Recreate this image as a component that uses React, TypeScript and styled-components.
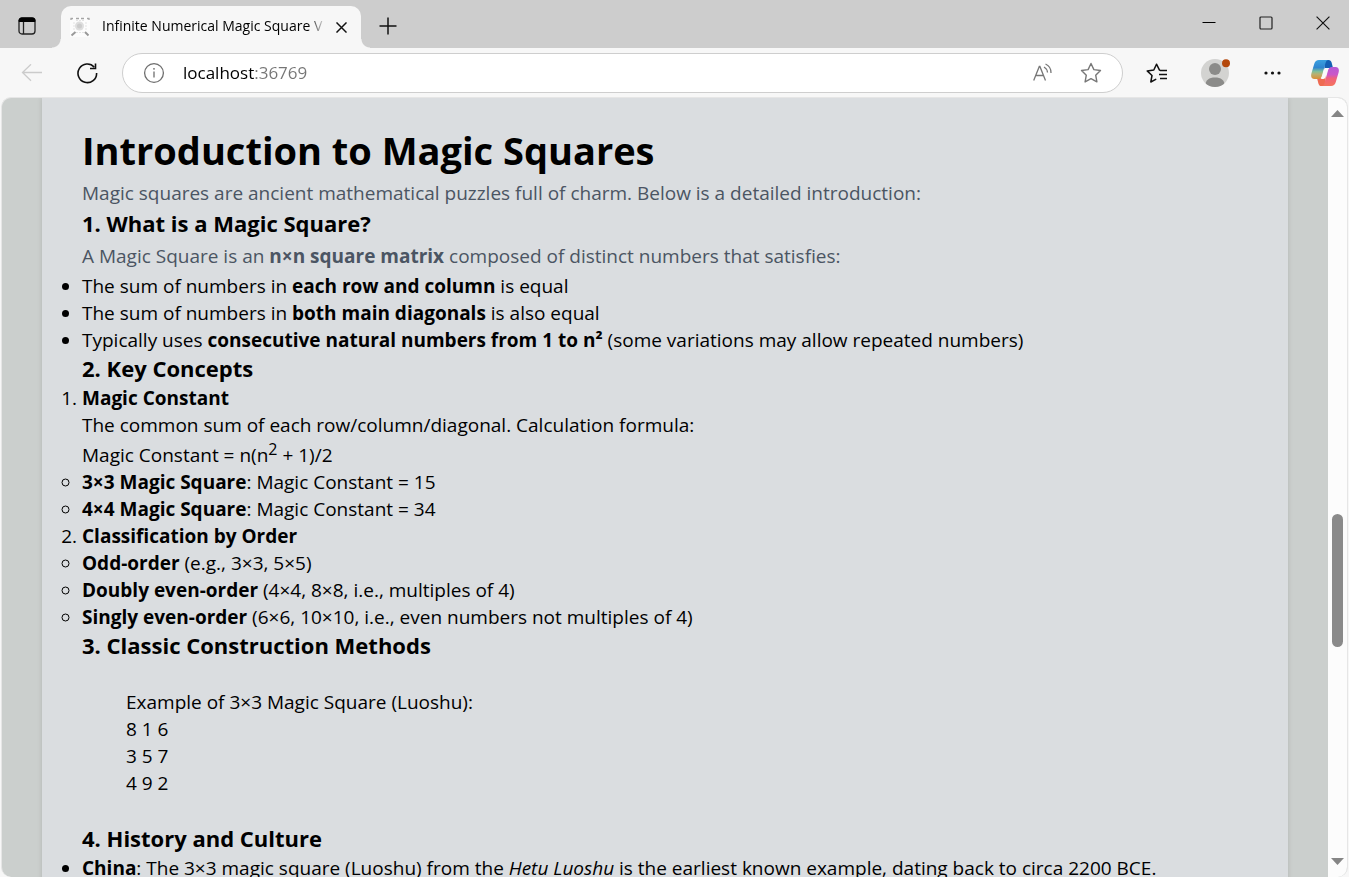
import React from "react";
import styled, { createGlobalStyle } from "styled-components";

const GlobalStyle = createGlobalStyle`
  *, *::before, *::after { box-sizing: border-box; }
  body { margin: 0; background: #f7f7f7; }
  button { border: 0; padding: 0; background: none; color: inherit; }
  svg { display: block; }
`;

const Window = styled.div`
  display: flex;
  flex-direction: column;
  height: 100vh;
  overflow: hidden;
  background: #f7f7f7;
  color: #000;
  font-family: "Open Sans", "Noto Sans", sans-serif;
`;

const TitleBar = styled.header`
  display: flex;
  align-items: stretch;
  height: 48px;
  flex: none;
  background: #cdcdcd;
`;

const TitleButton = styled.button<{ $width: number }>`
  display: flex;
  align-items: center;
  justify-content: center;
  flex: none;
  width: ${(p) => p.$width}px;
  padding-top: 4px;
`;

const Tab = styled.div`
  position: relative;
  display: flex;
  align-items: center;
  gap: 12px;
  width: 300px;
  margin: 6px 0 0 7px;
  padding: 0 8px 0 9px;
  border-radius: 10px 10px 0 0;
  background: #f7f7f7;

  &::before,
  &::after {
    content: "";
    position: absolute;
    bottom: 0;
    width: 9px;
    height: 9px;
  }
  &::before {
    right: 100%;
    background: radial-gradient(circle at 0 0, #cdcdcd 8px, #f7f7f7 9px);
  }
  &::after {
    left: 100%;
    background: radial-gradient(circle at 100% 0, #cdcdcd 8px, #f7f7f7 9px);
  }
`;

const TabTitle = styled.span`
  flex: 1;
  overflow: hidden;
  white-space: nowrap;
  font-size: 14px;
  line-height: 24px;
  padding-bottom: 2px;
  mask-image: linear-gradient(to right, #000 206px, transparent 224px);
`;

const CloseTab = styled.button`
  display: flex;
  align-items: center;
  justify-content: center;
  flex: none;
  width: 24px;
  height: 24px;
  margin-left: -12px;
`;

const WindowControls = styled.div`
  display: flex;
  gap: 5px;
  height: 42px;
  margin-left: auto;
`;

const Toolbar = styled.nav`
  display: flex;
  align-items: center;
  gap: 10px;
  height: 49px;
  flex: none;
  padding: 0 6px 0 10px;
`;

const ToolButton = styled.button<{ $width?: number }>`
  display: flex;
  align-items: center;
  justify-content: center;
  flex: none;
  width: ${(p) => p.$width ?? 48}px;
  height: 40px;
`;

const AddressBar = styled.label`
  display: flex;
  align-items: center;
  flex: 1;
  height: 40px;
  margin-left: 3px;
  padding: 0 7px 0 20px;
  border: 1px solid #cecece;
  border-radius: 20px;
  background: #fff;
`;

const AddressInput = styled.input`
  flex: 1;
  min-width: 0;
  margin-left: 18px;
  padding: 0;
  border: 0;
  outline: 0;
  font-family: inherit;
  font-size: 17px;
  line-height: 26px;
  background: linear-gradient(to right, #000 71px, #757575 71px);
  background-clip: text;
  -webkit-text-fill-color: transparent;
`;

const Viewport = styled.div`
  display: flex;
  flex: 1;
  min-height: 0;
  margin: 0 1px;
  border: 1px solid #e6e6e6;
  border-bottom: 0;
  border-radius: 10px;
  overflow: hidden;
  background: #cbcfcd;
`;

const Page = styled.main`
  flex: 1;
  min-width: 0;
  padding: 0 40px;
  overflow: hidden;
`;

const Article = styled.article`
  min-height: 100%;
  padding: 26px 40px;
  background: #dadde0;
  box-shadow: 0 0 5px rgba(0, 0, 0, 0.12);
  font-size: 19px;
  line-height: 27px;
`;

const Title = styled.h1`
  margin: 0;
  font-size: 38px;
  line-height: 53px;
`;

const Heading = styled.h3`
  margin: 0 0 2px;
  font-size: 22px;
  line-height: 29px;
`;

const Paragraph = styled.p`
  margin: 0;
  line-height: 32px;
  color: #4b5563;
`;

const List = styled.ul<{ $marker?: string }>`
  margin: 0;
  padding: 0;
  list-style: ${(p) => p.$marker ?? "disc"} outside;

  ${Paragraph} + & {
    margin-top: 1px;
  }
`;

const Numbered = styled.ol`
  margin: 0;
  padding: 0;
`;

const Formula = styled.div`
  padding-top: 3px;

  sup {
    font-size: 16px;
    line-height: 0;
  }
`;

const Example = styled.div`
  padding: 27px 44px;
`;

const Scrollbar = styled.div`
  display: flex;
  flex-direction: column;
  align-items: center;
  flex: none;
  width: 19px;
  padding: 12px 0;
  background: #fcfcfc;
`;

const Track = styled.div`
  display: flex;
  flex-direction: column;
  flex: 1;
  padding: 4px 0;
`;

const Space = styled.div<{ $share: number }>`
  flex: ${(p) => p.$share} 0 0;
`;

const Thumb = styled.div`
  flex: 132 0 0;
  width: 11px;
  border-radius: 6px;
  background: #8a8a8a;
`;

const TabMenuIcon = () => (
  <svg width="18" height="18" viewBox="0 0 18 18" fill="none">
    <rect x="1" y="1" width="16" height="16" rx="3" stroke="#222" strokeWidth="1.3" />
    <path d="M1 4.500V3.500A2.500 2.500 0 0 1 3.500 1h11A2.500 2.500 0 0 1 17 3.500v1z" fill="#000" stroke="#000" />
    <path d="M5.500 5v12" stroke="#222" strokeWidth="1.3" />
  </svg>
);

const Favicon = () => (
  <svg width="20" height="20" viewBox="0 0 20 20" fill="none">
    <rect width="20" height="20" fill="#fcfcfc" />
    <circle cx="9.500" cy="9" r="4.500" fill="#dedede" />
    <circle cx="9.500" cy="9" r="2.500" fill="#cccccc" />
    <path d="M4 5v9M16 5v9M6 3.500h8M6 15.500h8" stroke="#e3e3e3" strokeDasharray="2 1" />
    <path d="M1 3V1.500h2M17 1.500h2V3M6 1.500h3M11 1.500h3" stroke="#a5a5a5" strokeWidth="1.3" />
    <path d="M1.500 18.500l4-3.500M18.500 18.500l-3.500-3.500" stroke="#999" strokeWidth="2" />
  </svg>
);

const CloseIcon = ({ size, weight }: { size: number; weight: number }) => (
  <svg width={size} height={size} viewBox="0 0 12 12" stroke="#111" strokeWidth={weight}>
    <path d="M.5.5l11 11M11.500.5l-11 11" />
  </svg>
);

const PlusIcon = () => (
  <svg width="18" height="18" viewBox="0 0 18 18" stroke="#111" strokeWidth="1.5">
    <path d="M9 .5v17M.5 9h17" />
  </svg>
);

const MinimizeIcon = () => (
  <svg width="14" height="14" viewBox="0 0 14 14" stroke="#000">
    <path d="M.5 6.500h13" />
  </svg>
);

const MaximizeIcon = () => (
  <svg width="14" height="14" viewBox="0 0 14 14" fill="none" stroke="#222" strokeWidth="1.2">
    <rect x="1" y="1" width="12" height="12" rx="1" />
  </svg>
);

const BackIcon = () => (
  <svg width="22" height="18" viewBox="0 0 22 18" fill="none" stroke="#cbcbcb" strokeWidth="1.3">
    <path d="M21 8.500H1.500M10 0.300L1.500 8.500l8.500 8.200" />
  </svg>
);

const ReloadIcon = () => (
  <svg width="22" height="22" viewBox="0 0 22 22" fill="none" stroke="#111" strokeWidth="1.6">
    <path d="M20.600 11A9.300 9.300 0 1 1 18.300 5.200" />
    <path d="M19.500 1.500V6.500H14" />
  </svg>
);

const InfoIcon = () => (
  <svg width="22" height="22" viewBox="0 0 22 22" fill="none" stroke="#6e6e6e" strokeWidth="1.3">
    <circle cx="11" cy="11" r="9.400" />
    <path d="M11 9.500v6" />
    <circle cx="11" cy="6.800" r=".9" fill="#6e6e6e" stroke="none" />
  </svg>
);

const ReadAloudIcon = () => (
  <svg width="20" height="20" viewBox="0 0 20 20" fill="none" stroke="#777" strokeWidth="1.3">
    <path d="M.7 17.500L6.300 3.500h.6l5.600 14M2.700 12.500h7.800" />
    <path d="M11 4a7 7 0 0 1 3.500 5.500M12.500 1a9.500 9.500 0 0 1 5.500 9" />
  </svg>
);

const StarIcon = () => (
  <svg width="22" height="22" viewBox="0 0 22 22" fill="none" stroke="#777" strokeWidth="1.4" strokeLinejoin="round">
    <path d="M11 1.500l2.900 6.100 6.600.9-4.800 4.700 1.200 6.700L11 16.700 5.100 19.900l1.200-6.700L1.500 8.500l6.600-.9z" />
  </svg>
);

const FavoritesIcon = () => (
  <svg width="22" height="20" viewBox="0 0 22 20" fill="none" stroke="#111" strokeWidth="1.5" strokeLinejoin="round" strokeLinecap="round">
    <path d="M13.500 7.200L10.500 1.200 7.800 7 1.200 7.900 6 12.500 4.800 19l4.900-2.600" />
    <path d="M14 7.500H21M13 11.500H21M14 15.500H21" strokeLinecap="butt" />
  </svg>
);

const ProfileIcon = () => (
  <svg width="30" height="28" viewBox="0 0 30 28">
    <clipPath id="avatar">
      <circle cx="15" cy="14" r="14" />
    </clipPath>
    <circle cx="15" cy="14" r="14" fill="#d3d3d1" />
    <g clipPath="url(#avatar)" fill="#8b8b89">
      <circle cx="15" cy="10" r="6" />
      <path d="M5.500 26c0-5 3.500-7.500 9.500-7.500s9.500 2.500 9.500 7.500a14 14 0 0 1-19 0z" />
    </g>
    <circle cx="26" cy="4.200" r="4" fill="#b4480c" />
  </svg>
);

const MoreIcon = () => (
  <svg width="18" height="4" viewBox="0 0 18 4" fill="#111">
    <circle cx="2" cy="2" r="1.600" />
    <circle cx="8.500" cy="2" r="1.600" />
    <circle cx="15" cy="2" r="1.600" />
  </svg>
);

const CopilotIcon = () => (
  <svg width="28" height="26" viewBox="0 0 28 26">
    <defs>
      <linearGradient id="copilotLeft" x1="0" y1="0" x2="0" y2="1">
        <stop offset="0" stopColor="#3aa0e0" />
        <stop offset=".4" stopColor="#2f86d0" />
        <stop offset=".6" stopColor="#7fbf9a" />
        <stop offset=".75" stopColor="#b9b070" />
        <stop offset="1" stopColor="#d98f36" />
      </linearGradient>
      <linearGradient id="copilotRight" x1="0" y1="0" x2="0" y2="1">
        <stop offset="0" stopColor="#b45ad6" />
        <stop offset=".4" stopColor="#cb57c8" />
        <stop offset=".6" stopColor="#f0627c" />
        <stop offset="1" stopColor="#f4745c" />
      </linearGradient>
    </defs>
    <path d="M13 0h4.500c1.800 0 2.600 1 3.100 2.600L22 8h-5c-2 0-2.800 1-3.400 3z" fill="#1460b4" />
    <path d="M15 26h-4.500c-1.800 0-2.600-1-3.100-2.600L6 18h5c2 0 2.800-1 3.400-3z" fill="#ee6b52" />
    <path d="M8 0h9.500c-1.600 0-2.400 1.200-3 3L11 15.500c-.6 2-1.500 3.500-4 3.500H3.500C.5 19-.4 16.500.4 13.500L3.200 4C4 1.500 5.500 0 8 0z" fill="url(#copilotLeft)" />
    <path d="M20 26h-9.500c1.600 0 2.400-1.200 3-3L17 10.500c.6-2 1.500-3.500 4-3.500h3.500c3 0 3.900 2.500 3.100 5.500L24.800 22c-.8 2.500-2.300 4-4.800 4z" fill="url(#copilotRight)" />
    <path d="M14 8h4c-1 .8-1.400 2-1.800 3.200L14.500 17c-.4 1.200-1 2-2.200 2H9.500c1-.8 1.500-1.600 1.900-3l1.500-6c.2-.9.500-1.600 1.100-2z" fill="#fafafa" />
  </svg>
);

const ArrowIcon = ({ down }: { down?: boolean }) => (
  <svg width="13" height="7" viewBox="0 0 13 7" fill="#858585">
    <path d={down ? "M0 0h13L6.500 7z" : "M0 7h13L6.500 0z"} />
  </svg>
);

export default function App() {
  return (
    <Window>
      <GlobalStyle />
      <TitleBar>
        <TitleButton $width={54} aria-label="Tab actions">
          <TabMenuIcon />
        </TitleButton>
        <Tab>
          <Favicon />
          <TabTitle>Infinite Numerical Magic Square V</TabTitle>
          <CloseTab aria-label="Close tab">
            <CloseIcon size={11} weight={1.6} />
          </CloseTab>
        </Tab>
        <TitleButton $width={54} aria-label="New tab">
          <PlusIcon />
        </TitleButton>
        <WindowControls>
          <TitleButton $width={52} aria-label="Minimize">
            <MinimizeIcon />
          </TitleButton>
          <TitleButton $width={52} aria-label="Maximize">
            <MaximizeIcon />
          </TitleButton>
          <TitleButton $width={52} aria-label="Close">
            <CloseIcon size={14} weight={1} />
          </TitleButton>
        </WindowControls>
      </TitleBar>
      <Toolbar>
        <ToolButton $width={44} aria-label="Back">
          <BackIcon />
        </ToolButton>
        <ToolButton $width={45} aria-label="Refresh">
          <ReloadIcon />
        </ToolButton>
        <AddressBar>
          <InfoIcon />
          <AddressInput aria-label="Address" defaultValue="localhost:36769" />
          <ToolButton aria-label="Read aloud">
            <ReadAloudIcon />
          </ToolButton>
          <ToolButton aria-label="Add to favorites">
            <StarIcon />
          </ToolButton>
        </AddressBar>
        <ToolButton aria-label="Favorites">
          <FavoritesIcon />
        </ToolButton>
        <ToolButton aria-label="Profile">
          <ProfileIcon />
        </ToolButton>
        <ToolButton aria-label="Settings and more">
          <MoreIcon />
        </ToolButton>
        <ToolButton $width={36} aria-label="Copilot">
          <CopilotIcon />
        </ToolButton>
      </Toolbar>
      <Viewport>
        <Page>
          <Article>
            <Title>Introduction to Magic Squares</Title>
            <Paragraph>
              Magic squares are ancient mathematical puzzles full of charm. Below is a detailed introduction:
            </Paragraph>
            <Heading>1. What is a Magic Square?</Heading>
            <Paragraph>
              A Magic Square is an <strong>n×n square matrix</strong> composed of distinct numbers that satisfies:
            </Paragraph>
            <List>
              <li>The sum of numbers in <strong>each row and column</strong> is equal</li>
              <li>The sum of numbers in <strong>both main diagonals</strong> is also equal</li>
              <li>
                Typically uses <strong>consecutive natural numbers from 1 to n²</strong> (some variations may allow
                repeated numbers)
              </li>
            </List>
            <Heading>2. Key Concepts</Heading>
            <Numbered>
              <li>
                <strong>Magic Constant</strong>
                <div>The common sum of each row/column/diagonal. Calculation formula:</div>
                <Formula>
                  Magic Constant = n(n<sup>2</sup> + 1)/2
                </Formula>
                <List $marker="circle">
                  <li><strong>3×3 Magic Square</strong>: Magic Constant = 15</li>
                  <li><strong>4×4 Magic Square</strong>: Magic Constant = 34</li>
                </List>
              </li>
              <li>
                <strong>Classification by Order</strong>
                <List $marker="circle">
                  <li><strong>Odd-order</strong> (e.g., 3×3, 5×5)</li>
                  <li><strong>Doubly even-order</strong> (4×4, 8×8, i.e., multiples of 4)</li>
                  <li><strong>Singly even-order</strong> (6×6, 10×10, i.e., even numbers not multiples of 4)</li>
                </List>
              </li>
            </Numbered>
            <Heading>3. Classic Construction Methods</Heading>
            <Example>
              <div>Example of 3×3 Magic Square (Luoshu):</div>
              <div>8 1 6</div>
              <div>3 5 7</div>
              <div>4 9 2</div>
            </Example>
            <Heading>4. History and Culture</Heading>
            <List>
              <li>
                <strong>China</strong>: The 3×3 magic square (Luoshu) from the <em>Hetu Luoshu</em> is the earliest
                known example, dating back to circa 2200 BCE.
              </li>
            </List>
          </Article>
        </Page>
        <Scrollbar aria-hidden="true">
          <ArrowIcon />
          <Track>
            <Space $share={390} />
            <Thumb />
            <Space $share={206} />
          </Track>
          <ArrowIcon down />
        </Scrollbar>
      </Viewport>
    </Window>
  );
}
